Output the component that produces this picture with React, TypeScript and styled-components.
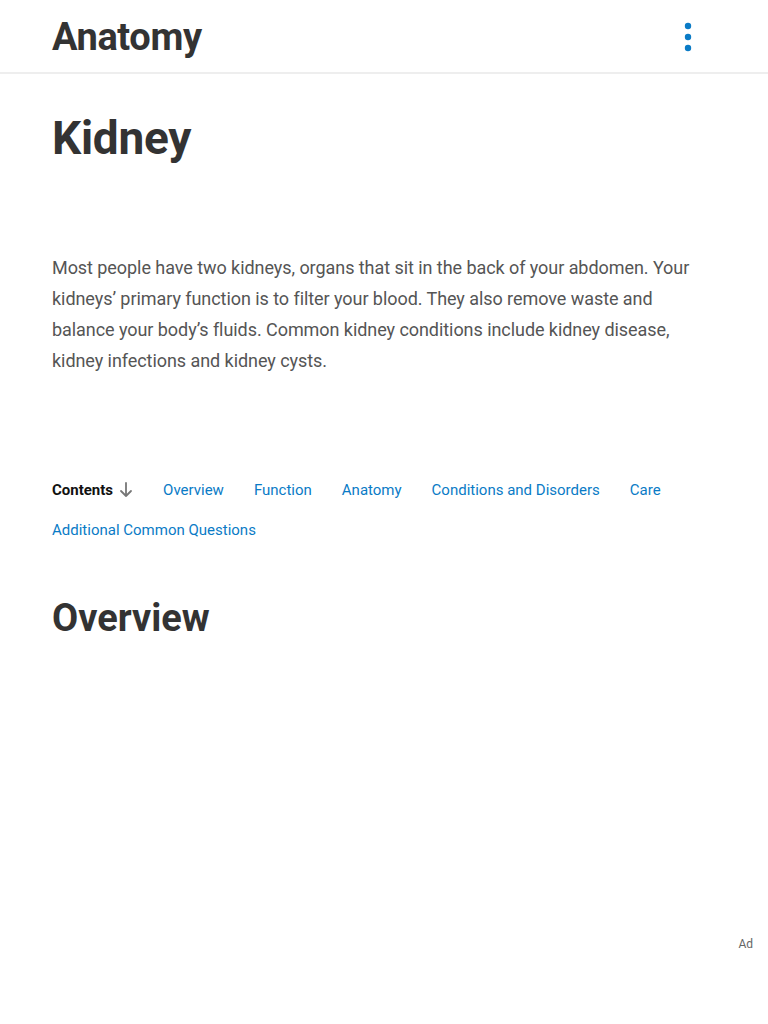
import styled, { createGlobalStyle } from "styled-components";

const GlobalStyle = createGlobalStyle`
  html, body {
    margin: 0;
    padding: 0;
    background: #fff;
    font-family: Roboto, "Liberation Sans", Arial, sans-serif;
  }
  * {
    box-sizing: border-box;
  }
`;

const Page = styled.div`
  width: 768px;
  min-height: 1024px;
  background: #fff;
  position: relative;
`;

const Header = styled.header`
  height: 74px;
  display: flex;
  align-items: center;
  justify-content: space-between;
  padding: 2px 68px 0 52px;
  border-bottom: 2px solid #eeeeee;
`;

const SiteTitle = styled.div`
  font-size: 38px;
  font-weight: 700;
  color: #333;
  letter-spacing: -0.4px;
  line-height: 46px;
`;

const MenuButton = styled.button`
  width: 24px;
  height: 40px;
  border: 0;
  padding: 0;
  background: none;
  display: flex;
  align-items: center;
  justify-content: center;
`;

const Main = styled.main`
  padding: 0 52px;
`;

const Title = styled.h1`
  margin: 37px 0 0;
  font-size: 46px;
  line-height: 55px;
  font-weight: 700;
  color: #333;
  letter-spacing: -0.3px;
`;

const Intro = styled.p`
  margin: 86px 0 0;
  font-size: 18px;
  line-height: 31px;
  color: #555;
  letter-spacing: -0.06px;
`;

const Contents = styled.nav`
  margin-top: 94px;
  display: flex;
  flex-wrap: wrap;
  column-gap: 30px;
  font-size: 15px;
  line-height: 40px;
`;

const ContentsLabel = styled.span`
  display: inline-flex;
  align-items: center;
  gap: 6px;
  font-weight: 700;
  color: #111;
`;

const TocLink = styled.a`
  color: #0a7bc6;
  text-decoration: none;
`;

const SectionTitle = styled.h2`
  margin: 45px 0 0;
  font-size: 38px;
  line-height: 46px;
  font-weight: 700;
  color: #333;
`;

const AdLabel = styled.span`
  position: absolute;
  right: 15px;
  top: 937px;
  font-size: 12px;
  color: #666;
`;

const links = [
  "Overview",
  "Function",
  "Anatomy",
  "Conditions and Disorders",
  "Care",
  "Additional Common Questions",
];

export default function App() {
  return (
    <Page>
      <GlobalStyle />
      <Header>
        <SiteTitle>Anatomy</SiteTitle>
        <MenuButton aria-label="Menu">
          <svg width="8" height="30" viewBox="0 0 8 30">
            <circle cx="4" cy="4" r="3.2" fill="#0a7bc6" />
            <circle cx="4" cy="15" r="3.2" fill="#0a7bc6" />
            <circle cx="4" cy="26" r="3.2" fill="#0a7bc6" />
          </svg>
        </MenuButton>
      </Header>
      <Main>
        <Title>Kidney</Title>
        <Intro>
          Most people have two kidneys, organs that sit in the back of your
          abdomen. Your kidneys’ primary function is to filter your blood. They
          also remove waste and balance your body’s fluids. Common kidney
          conditions include kidney disease, kidney infections and kidney cysts.
        </Intro>
        <Contents>
          <ContentsLabel>
            Contents
            <svg width="14" height="16" viewBox="0 0 14 16" fill="none">
              <path
                d="M7 1v13M2 9l5 5 5-5"
                stroke="#777"
                strokeWidth="1.8"
                strokeLinecap="round"
                strokeLinejoin="round"
              />
            </svg>
          </ContentsLabel>
          {links.map((l) => (
            <TocLink key={l} href="#">
              {l}
            </TocLink>
          ))}
        </Contents>
        <SectionTitle>Overview</SectionTitle>
      </Main>
      <AdLabel>Ad</AdLabel>
    </Page>
  );
}
